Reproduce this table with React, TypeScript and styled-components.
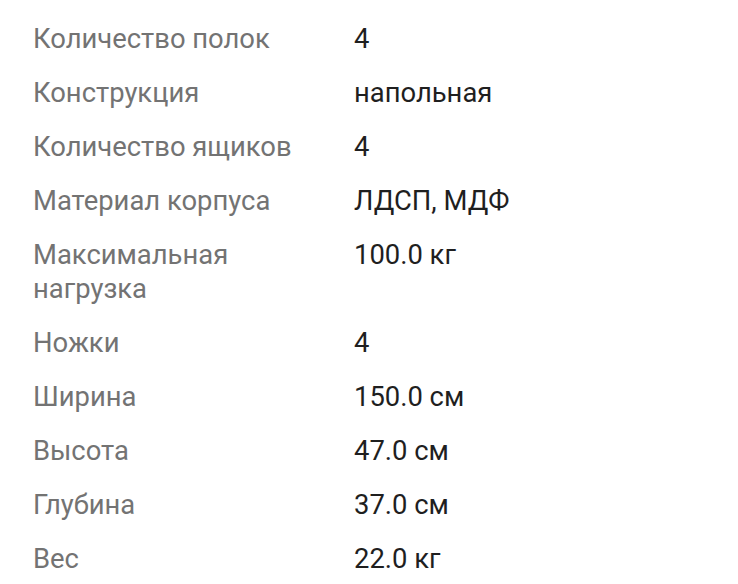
import React from "react";
import styled, { createGlobalStyle } from "styled-components";

const Global = createGlobalStyle`
  html, body { margin: 0; padding: 0; background: #ffffff; }
  body { font-family: Roboto, "Noto Sans", sans-serif; -webkit-font-smoothing: antialiased; }
`;

const Page = styled.div`
  width: 738px;
  height: 584px;
  overflow: hidden;
  background: #ffffff;
  padding: 21.5px 0 0 33px;
  box-sizing: border-box;
`;

const SpecList = styled.dl`
  display: grid;
  grid-template-columns: 321px 1fr;
  row-gap: 20px;
  margin: 0;
  font-size: 27.4px;
  line-height: 34px;
`;

const Label = styled.dt`
  margin: 0;
  color: #737373;
  padding-right: 40px;
`;

const Value = styled.dd`
  margin: 0;
  color: #1f1f1f;
`;

const specs: [string, string][] = [
  ["Количество полок", "4"],
  ["Конструкция", "напольная"],
  ["Количество ящиков", "4"],
  ["Материал корпуса", "ЛДСП, МДФ"],
  ["Максимальная нагрузка", "100.0 кг"],
  ["Ножки", "4"],
  ["Ширина", "150.0 см"],
  ["Высота", "47.0 см"],
  ["Глубина", "37.0 см"],
  ["Вес", "22.0 кг"],
];

export default function App() {
  return (
    <>
      <Global />
      <Page>
        <SpecList>
          {specs.map(([k, v]) => (
            <React.Fragment key={k}>
              <Label>{k}</Label>
              <Value>{v}</Value>
            </React.Fragment>
          ))}
        </SpecList>
      </Page>
    </>
  );
}
